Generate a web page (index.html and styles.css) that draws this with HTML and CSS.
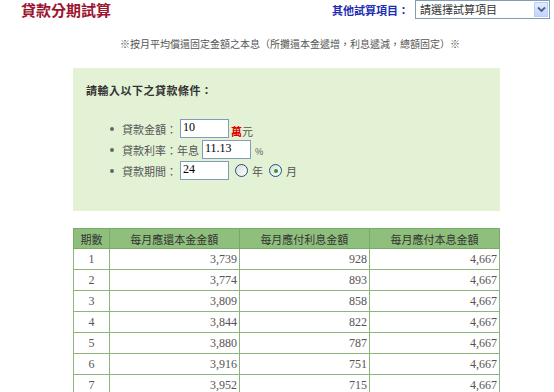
FILE: index.html
```html
<!DOCTYPE html>
<html lang="zh-Hant">
<head>
    <meta charset="UTF-8">
    <title>貸款分期試算</title>
    <link rel="stylesheet" href="styles.css">
</head>
<body>
    <div class="topbar">
        <h1 class="title">貸款分期試算</h1>
        <div class="other">
            <span class="other-label">其他試算項目：</span>
            <div class="fake-select">
                <span class="fake-select-text">請選擇試算項目</span>
                <span class="fake-select-btn">
                    <svg width="9" height="7" viewBox="0 0 9 7"><path d="M1 1.5 L4.5 5 L8 1.5" fill="none" stroke="#4d6185" stroke-width="1.8"/></svg>
                </span>
            </div>
        </div>
    </div>

    <p class="note">※按月平均償還固定金額之本息（所攤還本金遞增，利息遞減，總額固定）※</p>

    <div class="form-box">
        <div class="form-title">請輸入以下之貸款條件：</div>
        <ul class="fields">
            <li>
                <span class="lbl">貸款金額：</span>
                <input class="txt" type="text" value="10">
                <span class="unit"><span class="red">萬</span>元</span>
            </li>
            <li>
                <span class="lbl">貸款利率：年息</span>
                <input class="txt" type="text" value="11.13">
                <span class="pct">%</span>
            </li>
            <li>
                <span class="lbl">貸款期間：</span>
                <input class="txt" type="text" value="24">
                <label class="opt"><span class="radio"></span>年</label>
                <label class="opt"><span class="radio on"></span>月</label>
            </li>
        </ul>
    </div>

    <table class="result">
        <thead>
            <tr>
                <th class="c-no">期數</th>
                <th>每月應還本金金額</th>
                <th>每月應付利息金額</th>
                <th>每月應付本息金額</th>
            </tr>
        </thead>
        <tbody>
            <tr><td class="c-no">1</td><td>3,739</td><td>928</td><td>4,667</td></tr>
            <tr><td class="c-no">2</td><td>3,774</td><td>893</td><td>4,667</td></tr>
            <tr><td class="c-no">3</td><td>3,809</td><td>858</td><td>4,667</td></tr>
            <tr><td class="c-no">4</td><td>3,844</td><td>822</td><td>4,667</td></tr>
            <tr><td class="c-no">5</td><td>3,880</td><td>787</td><td>4,667</td></tr>
            <tr><td class="c-no">6</td><td>3,916</td><td>751</td><td>4,667</td></tr>
            <tr><td class="c-no">7</td><td>3,952</td><td>715</td><td>4,667</td></tr>
        </tbody>
    </table>
</body>
</html>
```

FILE: styles.css
```css
body {
    margin: 0;
    background: #fff;
    font-family: "Noto Sans CJK TC", "Noto Sans", sans-serif;
    color: #444;
    overflow: hidden;
}

.topbar {
    display: flex;
    justify-content: space-between;
    align-items: center;
    height: 19px;
    padding-left: 21px;
}

.title {
    margin: 0;
    font-size: 15px;
    line-height: 19px;
    font-weight: bold;
    color: #9c1430;
}

.other {
    display: flex;
    align-items: center;
    gap: 6px;
    margin-right: 4px;
}

.other-label {
    font-size: 11px;
    font-weight: bold;
    color: #1c2cb4;
}

.fake-select {
    display: flex;
    align-items: center;
    justify-content: space-between;
    width: 133px;
    height: 17px;
    border: 1px solid #7f9db9;
    background: #fff;
    margin-top: -1px;
}

.fake-select-text {
    font-size: 11px;
    color: #333;
    padding-left: 4px;
}

.fake-select-btn {
    display: flex;
    align-items: center;
    justify-content: center;
    width: 14px;
    height: 15px;
    margin-right: 1px;
    background: linear-gradient(to bottom, #e3ecfd, #c3d5fb);
    border: 1px solid #b9cdf6;
    box-sizing: border-box;
}

.note {
    margin: 17px 0 0 120px;
    font-size: 10px;
    line-height: 16px;
    color: #555;
}

.form-box {
    width: 427px;
    height: 143px;
    margin: 16px 0 0 73px;
    background: #e3f2d5;
    box-sizing: border-box;
    padding-top: 14px;
}

.form-title {
    margin-left: 13px;
    font-size: 11px;
    font-weight: bold;
    letter-spacing: 0.5px;
    color: #333;
}

.fields {
    list-style: none;
    margin: 20px 0 0 0;
    padding: 0 0 0 37px;
}

.fields li {
    display: flex;
    align-items: center;
    height: 21px;
    font-size: 11px;
    color: #555;
}

.fields li::before {
    content: "";
    width: 4px;
    height: 4px;
    border-radius: 50%;
    background: #666;
    margin-right: 8px;
}

.lbl {
    margin-right: 3px;
}

.txt {
    width: 49px;
    height: 19px;
    box-sizing: border-box;
    border: 1px solid #7f9db9;
    padding: 0 1px 3px 2px;
    font-family: "Liberation Serif", serif;
    font-size: 12px;
    color: #000;
    background: #fff;
}

.unit {
    margin-left: 2px;
    font-size: 11px;
    padding-top: 4px;
}

.red {
    color: #e00000;
    font-weight: bold;
}

.pct {
    margin-left: 4px;
    font-size: 9px;
    padding-top: 4px;
}

.opt {
    display: flex;
    align-items: center;
    margin-left: 6px;
    gap: 4px;
}

.radio {
    width: 11px;
    height: 11px;
    border-radius: 50%;
    border: 1px solid #1c5180;
    background: linear-gradient(135deg, #dcdcd6, #fff);
    display: flex;
    align-items: center;
    justify-content: center;
}

.radio.on::after {
    content: "";
    width: 4px;
    height: 4px;
    border-radius: 50%;
    background: #21a121;
}

.result {
    margin: 17px 0 0 73px;
    width: 427px;
    border-collapse: collapse;
    font-size: 11px;
}

.result th {
    height: 19px;
    background: #8fbf7c;
    color: #333;
    font-weight: normal;
    border: 1px solid #7aa968;
    padding: 0;
    width: 130px;
}

.result th.c-no {
    width: 35px;
}

.result td {
    height: 20px;
    border: 1px solid #8bb77a;
    padding: 0 2px 0 0;
    text-align: right;
    font-family: "Liberation Serif", serif;
    font-size: 12px;
    color: #555;
}

.result td.c-no {
    text-align: center;
    padding: 0;
}
```
